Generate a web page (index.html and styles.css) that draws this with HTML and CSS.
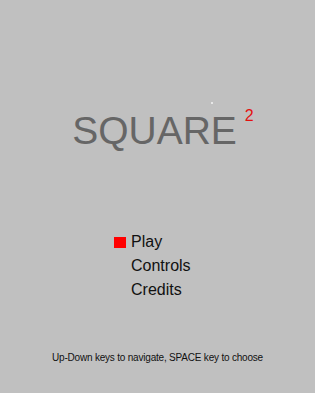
FILE: index.html
```html
<!DOCTYPE html>
<html lang="en">
<head>
  <meta charset="UTF-8">
  <meta name="viewport" content="width=device-width,initial-scale=1.0">
  <title>Square 2</title>
  <link rel="stylesheet" href="styles.css">
</head>
<body>
    <div class="screen">
        <div class="spark"></div>
        <div class="title">SQUARE<span class="sup">2</span></div>

        <ul class="menu">
            <li class="item selected"><span class="marker"></span>Play</li>
            <li class="item"><span class="marker"></span>Controls</li>
            <li class="item"><span class="marker"></span>Credits</li>
        </ul>

        <div class="help">Up-Down keys to navigate, SPACE key to choose</div>
    </div>
</body>
</html>
```

FILE: styles.css
```css
    html, body {
        margin: 0;
        height: 100%;
    }
    body {
        background-color: #c0c0c0;
        font-family: "Liberation Sans", Arial, sans-serif;
    }
    .screen {
        position: relative;
        display: flex;
        flex-flow: column;
        height: 100%;
    }
    .spark {
        position: absolute;
        left: 211px;
        top: 102px;
        width: 2px;
        height: 2px;
        border-radius: 50%;
        background-color: #f4f4f4;
    }
    .title {
        margin-top: 107px;
        text-align: center;
        font-size: 39px;
        line-height: 48px;
        color: #666;
        position: relative;
        left: -3px;
    }
    .title .sup {
        position: absolute;
        margin-left: 8px;
        margin-top: -1px;
        font-size: 16px;
        line-height: 20px;
        color: #e41010;
    }
    .menu {
        list-style: none;
        margin: 75px 0 0 0;
        padding: 0 0 0 114px;
    }
    .menu .item {
        display: flex;
        align-items: center;
        font-size: 16px;
        line-height: 24px;
        color: #111;
    }
    .menu .marker {
        width: 12px;
        height: 11px;
        margin-right: 5px;
        margin-top: 1px;
    }
    .menu .selected .marker {
        background-color: #f00;
    }
    .help {
        margin-top: 49px;
        text-align: center;
        font-size: 10px;
        line-height: 14px;
        letter-spacing: -0.2px;
        color: #111;
    }
```
